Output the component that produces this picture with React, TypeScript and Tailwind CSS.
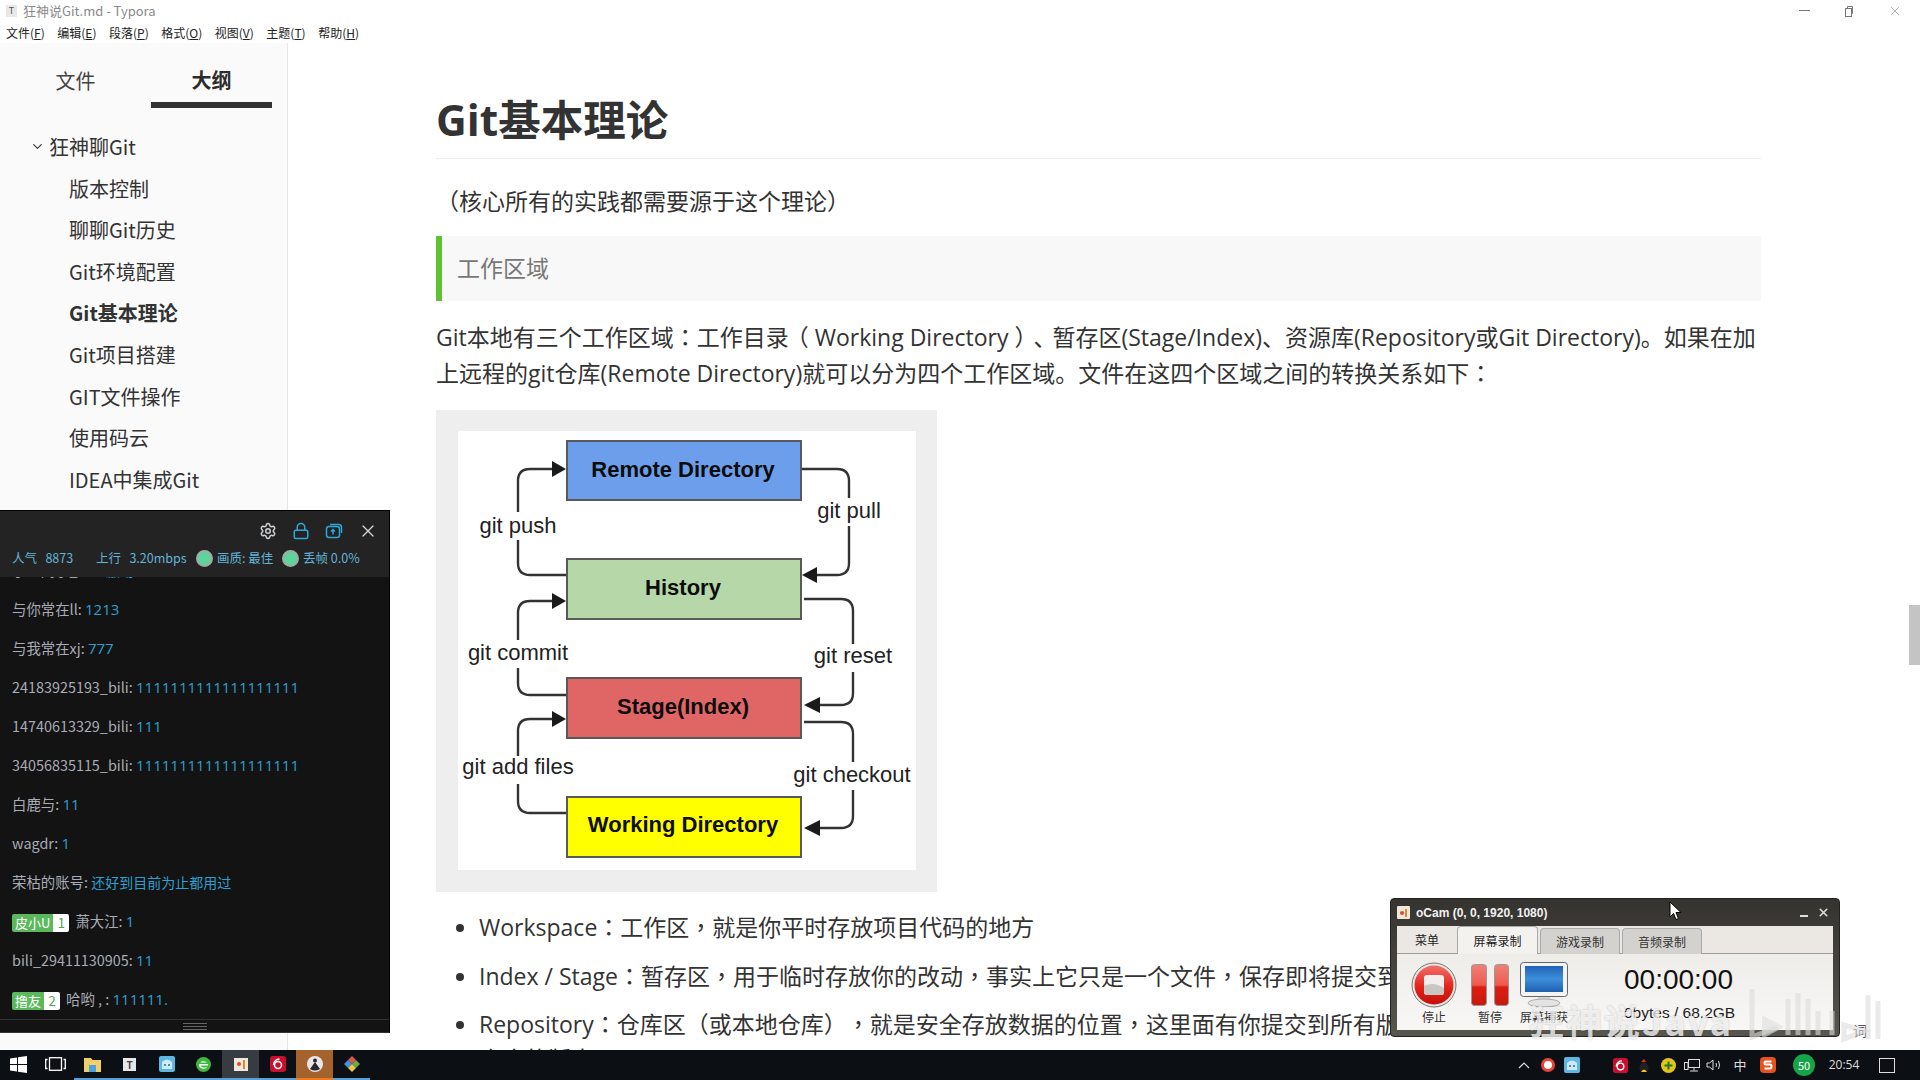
import { ChevronDown, Lock, Settings, X } from "lucide-react";

const sans = "font-['Open_Sans','Noto_Sans_CJK_SC',sans-serif]";

// centred full-width punctuation, as in the reference
function zh(s: string) {
  return s.split(/([：，])/).map((p, i) =>
    p === "：" || p === "，" ? (
      <span key={i} className="font-['Noto_Sans_CJK_TC',sans-serif]">
        {p}
      </span>
    ) : (
      p
    )
  );
}

const menu = [
  ["文件", "F"],
  ["编辑", "E"],
  ["段落", "P"],
  ["格式", "O"],
  ["视图", "V"],
  ["主题", "T"],
  ["帮助", "H"],
];

const outline = ["版本控制", "聊聊Git历史", "Git环境配置", "Git基本理论", "Git项目搭建", "GIT文件操作", "使用码云", "IDEA中集成Git"];

const chat = [
  ["小王同学_bili", "激动"],
  ["与你常在ll", "1213"],
  ["与我常在xj", "777"],
  ["24183925193_bili", "1111111111111111111"],
  ["14740613329_bili", "111"],
  ["34056835115_bili", "1111111111111111111"],
  ["白鹿与", "11"],
  ["wagdr", "1"],
  ["荣枯的账号", "还好到目前为止都用过"],
];

function Num({ children }: { children: React.ReactNode }) {
  return <span className="text-[#2e9fd0] text-[15px] font-['Open_Sans',sans-serif]">{children}</span>;
}

function TitleBar() {
  return (
    <div className="h-[23px] flex items-center pl-[6px] pr-[18px] pb-[2px] text-[13px] text-[#8a8a8a]">
      <div className="w-[11px] h-[12px] bg-[#e8e8e8] text-[9px] leading-[12px] text-center text-[#555]">T</div>
      <span className="ml-[6px]">狂神说Git.md - Typora</span>
      <div className="ml-auto flex items-center gap-[33px] text-[#777]">
        <div className="w-[11px] h-px bg-[#777]" />
        <svg width="12" height="12" viewBox="0 0 12 12" fill="none" stroke="#777">
          <rect x="2.5" y="3.5" width="6" height="8" fill="#fff" />
          <path d="M4.5 3V1.5h5v7H8.500" />
        </svg>
        <X size={14} strokeWidth={1} />
      </div>
    </div>
  );
}

function MenuBar() {
  return (
    <div className="h-[20px] flex items-center gap-[12.500px] pl-[6px] text-[12px] leading-none text-[#222]">
      {menu.map(([t, k]) => (
        <span key={k}>
          {t}(<span className="underline">{k}</span>)
        </span>
      ))}
    </div>
  );
}

function Sidebar() {
  return (
    <aside className="w-[288px] shrink-0 bg-[#fafafa] border-r border-[#e6e6e6] text-[#333]">
      <div className="flex h-[65px] text-[20px]">
        <div className="w-[151px] h-[59px] flex items-center justify-center pt-[16px] text-[#444]">文件</div>
        <div className="w-[121px] h-[65px] flex items-center justify-center pt-[14px] font-bold text-[#2c2c2c] border-b-[6px] border-[#333]">大纲</div>
      </div>
      <div className="mt-[18px] text-[20px] leading-[41.6px]">
        <div className="flex items-center pl-[30px]">
          <ChevronDown size={15} strokeWidth={1.800} className="mr-[4px]" />
          狂神聊Git
        </div>
        {outline.map((t) => (
          <div key={t} className={t === "Git基本理论" ? "pl-[69px] font-bold" : "pl-[69px]"}>
            {t}
          </div>
        ))}
      </div>
    </aside>
  );
}

function Diagram() {
  const line = "#333";
  return (
    <svg width="458" height="439" viewBox="458 431 458 439" fontFamily="'Liberation Sans',sans-serif">
      <g fill="none" stroke={line} strokeWidth="2.4">
        <path d="M567 575H530Q518 575 518 563V481Q518 469 530 469H556" />
        <path d="M801 469H837Q849 469 849 481V563Q849 575 837 575H812" />
        <path d="M567 695H530Q518 695 518 683V613Q518 601 530 601H556" />
        <path d="M804 599H841Q853 599 853 611V693Q853 705 841 705H814" />
        <path d="M567 813H530Q518 813 518 801V731Q518 719 530 719H556" />
        <path d="M804 722H841Q853 722 853 734V816Q853 828 841 828H814" />
      </g>
      <g fill="#1a1a1a">
        <path d="M566 469L552 461V477Z" />
        <path d="M566 601L552 593V609Z" />
        <path d="M566 719L552 711V727Z" />
        <path d="M802 575L817 567V583Z" />
        <path d="M804 705L820 697V713Z" />
        <path d="M804 828L820 820V836Z" />
      </g>
      <g stroke="#595959" strokeWidth="2">
        <rect x="567" y="441" width="234" height="59" fill="#6d9eeb" />
        <rect x="567" y="559" width="234" height="60" fill="#b6d7a8" />
        <rect x="567" y="678" width="234" height="60" fill="#e06666" />
        <rect x="567" y="797" width="234" height="60" fill="#ffff00" />
      </g>
      <g fontSize="22" fontWeight="700" textAnchor="middle" fill="#0d0d0d">
        <text x="683" y="477">Remote Directory</text>
        <text x="683" y="595">History</text>
        <text x="683" y="714">Stage(Index)</text>
        <text x="683" y="832">Working Directory</text>
      </g>
      <g fill="#fff">
        <rect x="478" y="512" width="80" height="28" />
        <rect x="808" y="498" width="84" height="28" />
        <rect x="466" y="640" width="104" height="28" />
        <rect x="812" y="644" width="82" height="28" />
        <rect x="460" y="756" width="116" height="28" />
        <rect x="792" y="762" width="122" height="28" />
      </g>
      <g fontSize="22" textAnchor="middle" fill="#222">
        <text x="518" y="533">git push</text>
        <text x="849" y="518">git pull</text>
        <text x="518" y="660">git commit</text>
        <text x="853" y="663">git reset</text>
        <text x="518" y="774">git add files</text>
        <text x="852" y="782">git checkout</text>
      </g>
    </svg>
  );
}

function Article() {
  return (
    <main className={`flex-1 min-w-0 pl-[148px] overflow-hidden text-[23px] leading-[35px] text-[#333] [text-spacing-trim:space-all] ${sans}`}>
      <div className="w-[1325px]">
        <h1 className="pt-[49px] pb-[11px] text-[42.500px] leading-[55px] font-bold border-b border-[#eee]">Git基本理论</h1>
        <p className="mt-[25px]">（核心所有的实践都需要源于这个理论）</p>
        <blockquote className="mt-[17px] h-[65px] flex items-center pl-[15px] bg-[#f8f8f8] border-l-[6px] border-[#5fc234] text-[#777]">工作区域</blockquote>
        <p className="mt-[18px]">
          {zh("Git本地有三个工作区域：工作目录")}
          <span className="ml-[-3px]">（</span> Working Directory <span className="tracking-[-4px]">）、</span>
          {zh("暂存区(Stage/Index)、资源库(Repository或Git Directory)。如果在加上远程的git仓库(Remote Directory)就可以分为四个工作区域。文件在这四个区域之间的转换关系如下：")}
        </p>
        <div className="mt-[19px] w-[501px] h-[482px] bg-[#eeeeee] pl-[22px] pt-[21px]">
          <div className="w-[458px] h-[439px] bg-white">
            <Diagram />
          </div>
        </div>
        <ul className="mt-[17px] flex flex-col gap-[12.500px] pl-[43px] list-disc">
          <li>{zh("Workspace：工作区，就是你平时存放项目代码的地方")}</li>
          <li>{zh("Index / Stage：暂存区，用于临时存放你的改动，事实上它只是一个文件，保存即将提交到文件列表信息")}</li>
          <li>{zh("Repository：仓库区（或本地仓库），就是安全存放数据的位置，这里面有你提交到所有版本的数据。其中HEAD指向最新放入仓库的版本")}</li>
        </ul>
      </div>
    </main>
  );
}

function Badge({ name, level }: { name: string; level: string }) {
  return (
    <span className="inline-flex h-[18px] rounded-[2px] overflow-hidden text-[13px] leading-[18px] mr-[6px] align-[-1px]">
      <span className="bg-[#5cb85c] text-white px-[3px]">{name}</span>
      <span className="bg-white text-[#4ca54c] w-[16px] text-center">{level}</span>
    </span>
  );
}

function ChatPanel() {
  return (
    <div className="absolute left-0 top-[510px] w-[390px] h-[523px] flex flex-col bg-[#131313] border-t border-r border-black text-[14.400px] font-['Noto_Sans_CJK_SC','Open_Sans',sans-serif] z-10">
      <div className="h-[66px] shrink-0 bg-[#232323] relative z-10">
        <div className="h-[39px] flex items-center justify-end gap-[15px] pr-[11px]">
          <Settings size={18} className="text-[#cfd2d6]" />
          <Lock size={18} className="text-[#2fa6d8]" />
          <svg width="18" height="18" viewBox="0 0 18 18" fill="none" stroke="#2fa6d8" strokeWidth="1.500">
            <rect x="1.500" y="4.500" width="13" height="11" rx="2.500" />
            <path d="M5 2.500h8.500a3 3 0 0 1 3 3V11" />
            <path d="M8 12.500V8M6 9.500l2-2 2 2" />
          </svg>
          <X size={20} strokeWidth={1.500} className="text-[#d8d8d8]" />
        </div>
        <div className="flex items-center pl-[12px] text-[12.500px] text-[#62b4d8] leading-none whitespace-nowrap">
          <span className="w-[84px]">人气&nbsp;&nbsp; 8873</span>
          <span className="w-[100px]">上行&nbsp;&nbsp; 3.20mbps</span>
          <span className="w-[17px] h-[17px] rounded-full bg-[#5cd49a] border-[2px] border-[#a3aba6] mr-[4px]" />
          <span className="w-[65px]">画质: 最佳</span>
          <span className="w-[17px] h-[17px] rounded-full bg-[#5cd49a] border-[2px] border-[#a3aba6] mr-[4px]" />
          <span>丢帧 0.0%</span>
        </div>
      </div>
      <div className="flex-1 min-h-0 overflow-hidden pl-[12px] text-[#a9acb6]">
        <div className="-mt-[27px]">
          {chat.map(([n, v]) => (
            <div key={n} className="h-[39px] leading-[39px] whitespace-nowrap">
              {n}: {/^\d/.test(v) ? <Num>{v}</Num> : <span className="text-[#2e9fd0] text-[14px]">{v}</span>}
            </div>
          ))}
          <div className="h-[39px] leading-[39px] whitespace-nowrap">
            <Badge name="皮小U" level="1" />
            萧大江: <Num>1</Num>
          </div>
          <div className="h-[39px] leading-[39px] whitespace-nowrap">
            bili_29411130905: <Num>11</Num>
          </div>
          <div className="h-[39px] leading-[39px] whitespace-nowrap">
            <Badge name="撸友" level="2" />
            哈哟 , : <Num>111111.</Num>
          </div>
        </div>
      </div>
      <div className="h-[14px] shrink-0 bg-[#131313] border-t border-b border-[#333] flex items-center justify-center">
        <div className="w-[24px] h-[7px] border-y border-[#666] flex items-center">
          <div className="w-full h-px bg-[#666]" />
        </div>
      </div>
    </div>
  );
}

function StopIcon() {
  return (
    <svg width="46" height="46" viewBox="0 0 46 46">
      <defs>
        <linearGradient id="stopRed" x1="0" y1="0" x2="0" y2="1">
          <stop offset="0" stopColor="#f0706a" />
          <stop offset="0.55" stopColor="#e2231a" />
          <stop offset="1" stopColor="#c20f0a" />
        </linearGradient>
      </defs>
      <circle cx="23" cy="23" r="22" fill="#e8e4e0" stroke="#777" />
      <circle cx="23" cy="23" r="19.500" fill="url(#stopRed)" />
      <rect x="13" y="13" width="20" height="20" rx="3" fill="#f1efec" />
      <path d="M13 24Q22 19 33 26V30Q33 33 30 33H16Q13 33 13 30Z" fill="#c9c7c4" />
    </svg>
  );
}

function PauseIcon() {
  return (
    <svg width="38" height="42" viewBox="0 0 38 42">
      <defs>
        <linearGradient id="pauseRed" x1="0" y1="0" x2="0" y2="1">
          <stop offset="0" stopColor="#f08078" />
          <stop offset="0.5" stopColor="#ee5a4e" />
          <stop offset="0.55" stopColor="#dc1e12" />
          <stop offset="1" stopColor="#c8180e" />
        </linearGradient>
      </defs>
      <rect x="0.500" y="0.500" width="15" height="41" rx="3" fill="url(#pauseRed)" stroke="#999" />
      <rect x="23.500" y="0.500" width="14" height="41" rx="3" fill="url(#pauseRed)" stroke="#999" />
    </svg>
  );
}

function MonitorIcon() {
  return (
    <svg width="48" height="46" viewBox="0 0 48 46">
      <defs>
        <linearGradient id="screenBlue" x1="0" y1="0" x2="0" y2="1">
          <stop offset="0" stopColor="#1f62b8" />
          <stop offset="0.5" stopColor="#3f8fdc" />
          <stop offset="1" stopColor="#1d5fae" />
        </linearGradient>
      </defs>
      <rect x="0.500" y="0.500" width="47" height="34" rx="3" fill="#f4f4f4" stroke="#666" />
      <rect x="5" y="4" width="38" height="26" fill="url(#screenBlue)" />
      <path d="M18 35h12l2 5H16z" fill="#d8d8d8" />
      <ellipse cx="24" cy="41" rx="16" ry="4" fill="#e4e4e4" stroke="#aaa" />
    </svg>
  );
}

function OcamWindow() {
  const tab = "w-[80px] h-[27px] mt-[2px] mr-[2px] rounded-t-[4px] bg-[#d4d2cf] border border-b-0 border-[#aaa] flex items-center justify-center text-[#333]";
  return (
    <div className="absolute left-[1390px] top-[898px] w-[450px] h-[139px] rounded-[4px] border border-[#222] bg-gradient-to-b from-[#34332f] to-[#57564f] px-[6px] text-[12px] font-['Noto_Sans_CJK_SC','Liberation_Sans',sans-serif] z-10">
      <div className="h-[27px] flex items-center text-[#f2f2f2]">
        <div className="w-[13px] h-[13px] bg-[#efe6dc] rounded-[1px] flex items-center justify-center gap-px">
          <span className="w-[4px] h-[4px] rounded-full bg-[#d8502a]" />
          <span className="w-[2px] h-[8px] bg-[#e08a2a]" />
        </div>
        <span className="ml-[6px] font-bold font-['Liberation_Sans',sans-serif]">oCam (0, 0, 1920, 1080)</span>
        <div className="ml-auto w-[8px] h-[2px] bg-[#ddd] mt-[6px]" />
        <X size={13} strokeWidth={3} className="ml-[9px] mr-[3px] text-[#ddd]" />
      </div>
      <div className="h-[104px] bg-[#ebe8e4] flex flex-col">
        <div className="h-[28px] flex shrink-0 border-b border-[#9c9c9c]">
          <div className="w-[60px] flex items-center justify-center text-[#222]">菜单</div>
          <div className="w-[81px] h-[28px] rounded-t-[4px] bg-[#f4f2ef] border border-b-0 border-[#aaa] flex items-center justify-center text-[#222] mr-[2px]">屏幕录制</div>
          <div className={tab}>游戏录制</div>
          <div className={tab}>音频录制</div>
        </div>
        <div className="flex-1 flex bg-gradient-to-b from-[#efedea] to-[#f8f7f5] text-[#333]">
          <div className="w-[74px] flex flex-col items-center pt-[8px]">
            <StopIcon />
            <span className="mt-[0px]">停止</span>
          </div>
          <div className="w-[38px] flex flex-col items-center pt-[10px]">
            <PauseIcon />
            <span className="mt-[2px] whitespace-nowrap">暂停</span>
          </div>
          <div className="w-[70px] flex flex-col items-center pt-[8px]">
            <MonitorIcon />
            <span className="mt-[0px] whitespace-nowrap">屏幕捕获</span>
          </div>
          <div className="ml-[45px] pt-[8px] text-[#111] font-['Liberation_Sans',sans-serif] whitespace-nowrap">
            <div className="text-[28px] leading-[36px]">00:00:00</div>
            <div className="mt-[4px] text-[15.500px] leading-[22px] text-[#222]">0bytes / 68.2GB</div>
          </div>
        </div>
      </div>
    </div>
  );
}

function Watermark() {
  return (
    <div className="absolute left-[1528px] top-[1000px] flex items-center text-[36px] font-bold leading-[40px] text-white/75 [text-shadow:0_0_2px_rgba(0,0,0,0.25)] font-['Noto_Sans_CJK_SC',sans-serif] z-20 whitespace-nowrap tracking-[2px]">
      狂神说Java
    </div>
  );
}

function BiliMark() {
  return (
    <svg className="absolute left-[1748px] top-[985px] z-20" width="136" height="60" viewBox="0 0 136 60" fill="none" stroke="#dcdcdc" strokeOpacity="0.6" strokeWidth="5">
      <path d="M4 4V52L30 42" />
      <path d="M14 30L36 42L14 54Z" fill="#e0e0e0" fillOpacity="0.6" stroke="none" />
      <path d="M40 14V50M50 8V50M60 14V50M70 26V50" />
      <path d="M84 26V50M96 40L116 46L96 54Z" />
      <path d="M120 10V54M130 16V54" />
    </svg>
  );
}

function Cursor() {
  return (
    <svg className="absolute left-[1669px] top-[901px] z-30" width="14" height="20" viewBox="0 0 14 20">
      <path d="M1 1V16L4.500 12.500L7 18.500L9.500 17.500L7 11.500H12Z" fill="#fff" stroke="#000" />
    </svg>
  );
}

function Slot({ active, warm, line = true, children }: { active?: boolean; warm?: boolean; line?: boolean; children: React.ReactNode }) {
  const bg = warm ? "bg-[#a4622c]" : active ? "bg-[#363c42]" : "";
  const bar = !line ? "border-transparent" : warm ? "border-[#f07a1a]" : "border-[#5b9fd8]";
  return <div className={`w-[37px] h-full flex items-center justify-center border-b-2 ${bg} ${bar}`}>{children}</div>;
}

function NeteaseIcon({ size }: { size: number }) {
  return (
    <svg width={size} height={size} viewBox="0 0 16 16">
      <rect width="16" height="16" rx="3" fill="#c8102e" />
      <circle cx="8" cy="9" r="3.500" fill="none" stroke="#fff" strokeWidth="1.500" />
      <path d="M9.500 3C7 3 3.500 5 3.500 9" fill="none" stroke="#fff" strokeWidth="1.500" />
    </svg>
  );
}

function MikuIcon({ size }: { size: number }) {
  return (
    <svg width={size} height={size} viewBox="0 0 16 16">
      <rect width="16" height="16" rx="2" fill="#5db7e0" />
      <path d="M3 13V6Q8 1 13 6V13Z" fill="#cfeaf6" />
      <circle cx="6" cy="9" r="1" fill="#1f6a94" />
      <circle cx="10" cy="9" r="1" fill="#1f6a94" />
    </svg>
  );
}

function Taskbar() {
  return (
    <footer className="h-[30px] shrink-0 bg-[#0c1014] flex items-center text-[#ddd] font-['Noto_Sans_CJK_SC',sans-serif]">
      <Slot line={false}>
        <svg width="17" height="17" viewBox="0 0 17 17" fill="#fff">
          <path d="M0 2.500L7 1.500V8H0zM8 1.300L17 0V8H8zM0 9H7V15.500L0 14.500zM8 9H17V17L8 15.700z" />
        </svg>
      </Slot>
      <Slot line={false}>
        <svg width="21" height="14" viewBox="0 0 21 14" fill="none" stroke="#fff" strokeWidth="1.300">
          <rect x="4.500" y="0.700" width="12" height="12.600" />
          <path d="M2.500 2.500H0.700V11.500H2.500M18.500 2.500H20.300V11.500H18.500" />
        </svg>
      </Slot>
      <Slot>
        <svg width="17" height="15" viewBox="0 0 17 15">
          <path d="M0 1H7L8.500 3H17V15H0z" fill="#f3cf6b" />
          <rect x="5" y="8" width="7" height="7" fill="#4aa3df" />
        </svg>
      </Slot>
      <Slot>
        <div className="w-[13px] h-[13px] bg-[#e8e8e8] text-[#444] text-[10px] leading-[13px] text-center font-bold">T</div>
      </Slot>
      <Slot>
        <MikuIcon size={16} />
      </Slot>
      <Slot>
        <svg width="15" height="15" viewBox="0 0 15 15">
          <circle cx="7.500" cy="7.500" r="7.500" fill="#3fb83f" />
          <path d="M3 7H12V8.500H4.500Q6 11 9 10.500L11.500 10Q9 12.500 6 11.500Q2.500 10.500 3 7Z M4 5.500Q7 3 11 5.500Z" fill="#fff" />
        </svg>
      </Slot>
      <Slot active>
        <div className="w-[14px] h-[13px] bg-[#efe6dc] flex items-center justify-center gap-[2px]">
          <span className="w-[4px] h-[4px] rounded-full bg-[#d8502a]" />
          <span className="w-[2px] h-[9px] bg-[#e08a2a]" />
        </div>
      </Slot>
      <Slot>
        <NeteaseIcon size={16} />
      </Slot>
      <Slot warm>
        <svg width="16" height="16" viewBox="0 0 16 16">
          <circle cx="8" cy="8" r="8" fill="#e8e6e6" />
          <path d="M3 13L8 6L13 13Q8 16 3 13Z" fill="#2a2630" />
          <circle cx="8" cy="4.500" r="2" fill="#2a2630" />
        </svg>
      </Slot>
      <Slot>
        <svg width="16" height="16" viewBox="0 0 16 16">
          <path d="M8 0L12 4L8 8L4 4Z" fill="#d9584a" />
          <path d="M4 4L8 8L4 12L0 8Z" fill="#4a90d9" />
          <path d="M12 4L16 8L12 12L8 8Z" fill="#6aa84f" />
          <path d="M8 8L12 12L8 16L4 12Z" fill="#e6c84a" />
        </svg>
      </Slot>

      <div className="ml-auto flex items-center h-full pr-[25px]">
        <div className="w-[24px] flex justify-center">
          <svg width="12" height="7" viewBox="0 0 12 7" fill="none" stroke="#ddd" strokeWidth="1.200">
            <path d="M1 6L6 1L11 6" />
          </svg>
        </div>
        <div className="w-[24px] flex justify-center">
          <div className="w-[14px] h-[14px] rounded-full border-[3px] border-[#e8423a] bg-white" />
        </div>
        <div className="w-[24px] flex justify-center">
          <MikuIcon size={16} />
        </div>
        <div className="w-[24px] ml-[24px] flex justify-center">
          <NeteaseIcon size={15} />
        </div>
        <div className="w-[24px] flex justify-center">
          <svg width="15" height="15" viewBox="0 0 15 15">
            <path d="M4 14Q1 10 4 6Q7 2 10 6Q13 10 10 14Z" fill="#222" />
            <path d="M4 14Q7 9 10 14Z" fill="#f4c430" />
            <path d="M4 4L7 1L9 4Z" fill="#e0301e" />
          </svg>
        </div>
        <div className="w-[24px] flex justify-center">
          <svg width="15" height="15" viewBox="0 0 15 15">
            <circle cx="7.500" cy="7.500" r="7.500" fill="#e3c31c" />
            <path d="M6.500 3.500H8.500V6.500H11.500V8.500H8.500V11.500H6.500V8.500H3.500V6.500H6.500Z" fill="#1e7a1e" />
          </svg>
        </div>
        <div className="w-[24px] flex justify-center">
          <svg width="16" height="15" viewBox="0 0 16 15" fill="none" stroke="#ddd">
            <rect x="4.500" y="1.500" width="11" height="8" />
            <rect x="0.500" y="4.500" width="3.500" height="7" />
            <path d="M10 9.500V12.500M6 13H14" />
          </svg>
        </div>
        <div className="w-[20px] flex justify-center">
          <svg width="16" height="14" viewBox="0 0 16 14" fill="none" stroke="#ddd">
            <path d="M1 5V9H3.500L7 12V2L3.500 5Z" />
            <path d="M10 5Q11 7 10 9M12.500 3Q14.500 7 12.500 11" />
          </svg>
        </div>
        <div className="w-[24px] ml-[4px] text-center text-[13px]">中</div>
        <div className="w-[24px] ml-[4px] flex justify-center">
          <svg width="16" height="16" viewBox="0 0 16 16">
            <path d="M4 0H12Q16 0 16 4V12Q16 16 12 16H4Q0 16 0 12V4Q0 0 4 0Z" fill="#e8501e" />
            <path d="M11.500 4.500H6Q4.500 4.500 4.500 6Q4.500 7.500 6 7.500H10Q11.500 7.500 11.500 9.500Q11.500 11.500 10 11.500H4.500" fill="none" stroke="#fff" strokeWidth="2" />
          </svg>
        </div>
        <div className="w-[22px] h-[22px] ml-[13px] rounded-full bg-[#16a34a] text-[11px] leading-[22px] text-center text-white">50</div>
        <span className="w-[40px] ml-[9px] text-[12px] text-center font-['Open_Sans',sans-serif]">20:54</span>
        <div className="ml-[15px] w-[16px] h-[15px] border border-[#ddd]" />
      </div>
    </footer>
  );
}

export default function App() {
  return (
    <div className="relative w-full h-[1080px] overflow-hidden bg-white flex flex-col font-['Noto_Sans_CJK_SC','Open_Sans',sans-serif]">
      <TitleBar />
      <MenuBar />
      <div className="flex-1 min-h-0 flex">
        <Sidebar />
        <Article />
      </div>
      <Taskbar />

      <ChatPanel />
      <OcamWindow />
      <Watermark />
      <BiliMark />
      <Cursor />
      <div className="absolute right-0 top-[605px] w-[11px] h-[60px] bg-[#c4c4c4]" />
      <span className="absolute left-[1853px] top-[1020px] text-[14px] text-[#555]">词</span>
    </div>
  );
}
